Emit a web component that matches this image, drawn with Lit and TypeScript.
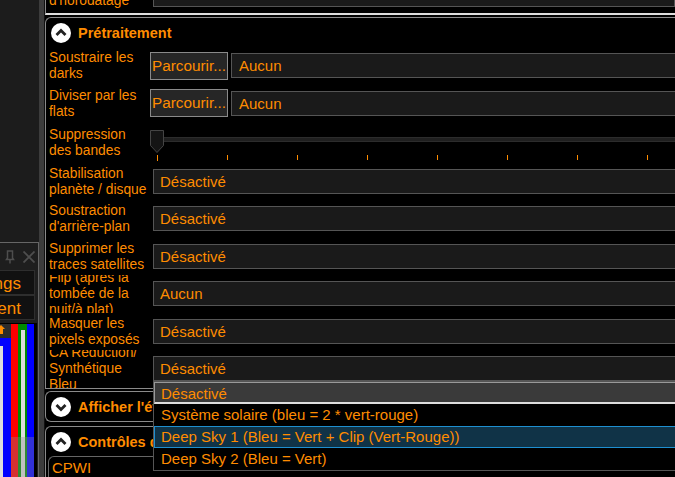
import { LitElement, html, css } from "lit";
import { customElement } from "lit/decorators.js";

const chevron = (up: boolean) => html`<svg class="chev" width="22" height="22" viewBox="0 0 22 22">
  <circle cx="11" cy="11" r="10" fill="#fff"></circle>
  <path d=${up ? "M6.5 13 L11 8.5 L15.5 13" : "M6.5 9 L11 13.5 L15.5 9"} fill="none" stroke="#222" stroke-width="2.8"></path>
</svg>`;

const rows: [string, string][] = [
  ["Stabilisation planète / disque", "Désactivé"],
  ["Soustraction d'arrière-plan", "Désactivé"],
  ["Supprimer les traces satellites", "Désactivé"],
  ["Flip (après la tombée de la nuit/à plat)", "Aucun"],
  ["Masquer les pixels exposés", "Désactivé"],
];

@customElement("app-root")
export class AppRoot extends LitElement {
  static styles = css`
    :host { display: block; width: 675px; height: 477px; overflow: hidden; background: #000; }
    * { box-sizing: border-box; }
    .page { display: flex; width: 675px; height: 477px; font-family: "Liberation Sans", Arial, sans-serif; color: #ff8c00; font-size: 13.8px; }
    .side { width: 39px; flex: none; display: flex; flex-direction: column; background: #1c1c1c; }
    .side-top { height: 242px; flex: none; }
    .dock { flex: 1; min-height: 0; display: flex; flex-direction: column; border-top: 1px solid #666; border-right: 1px solid #666; overflow: hidden; background: #1e1e1e; }
    .dock-title { height: 27px; flex: none; display: flex; align-items: center; justify-content: flex-end; gap: 8px; padding-right: 3px; }
    .tab { height: 25px; flex: none; width: 35px; background: #111; border: 1px solid #2e2e2e; border-left: 0; font-size: 17px; line-height: 26px; display: flex; justify-content: flex-end; overflow: hidden; white-space: nowrap; padding-right: 13px; }
    .dock-gap { height: 3px; flex: none; }
    .hist { flex: 1; width: 37px; min-height: 0; position: relative; display: flex; background: #000; padding-right: 3px; border-top: 1px solid #000; }
    .hist-veil { position: absolute; left: 11px; right: 3px; bottom: 0; height: 40px; background: rgba(140,140,140,.35); }
    .hist-l { width: 11px; display: flex; flex-direction: column; }
    .hist-head { height: 14px; flex: none; background: #2c2c2c; display: flex; align-items: flex-start; }
    .hist-blue { flex: 1; background: #00f; padding-top: 8px; }
    .hist-blue i { display: block; width: 3px; height: 100%; background: #ddd; }
    .band { height: 100%; }
    .r { width: 7px; background: #f00; }
    .g { width: 9px; background: #008a00; padding: 6px 2px 0 3px; }
    .g i { display: block; height: 100%; background: #ddd; }
    .b { width: 7px; background: #00f; }
    .split { width: 6px; flex: none; background: #3c3c3c; border-right: 1px solid #111; }
    .main { flex: 1; min-width: 0; overflow: hidden; display: flex; flex-direction: column; }
    .prev { height: 15px; flex: none; border-bottom: 2px solid #ddd; border-left: 1px solid #888; padding-left: 3px; display: flex; overflow: hidden; }
    .prev-label { width: 104px; flex: none; height: 9px; display: flex; align-items: flex-end; overflow: hidden; line-height: 16px; white-space: nowrap; }
    .prev-box { flex: 1; height: 7px; background: #1a1a1a; border: 1px solid #555; border-top: 0; }
    .group { border: 1px solid #8a8a8a; border-right: 0; border-radius: 6px 0 0 0; margin-top: 2px; flex: none; }
    .head { display: flex; align-items: center; gap: 6px; padding-left: 4px; font-size: 14.5px; font-weight: 700; white-space: nowrap; overflow: hidden; }
    .chev { flex: none; }
    .pre { height: 372px; border-bottom: 1px solid #8a8a8a; border-radius: 6px 0 0 0; }
    .pre .head { height: 29px; }
    .grid { display: grid; grid-template-columns: 101px 1fr; grid-template-rows: 37.5px 37.5px 40.5px; grid-auto-rows: 37.5px; padding-left: 3px; }
    .label { height: 100%; display: flex; align-items: center; overflow: hidden; line-height: 16px; padding-top: 1px; }
    .ctl { position: relative; display: flex; align-items: center; gap: 3px; min-width: 0; }
    .btn { width: 78px; height: 28px; flex: none; background: #262626; border: 1px solid #8a8a8a; font-size: 15.3px; line-height: 26px; padding-left: 1px; white-space: nowrap; overflow: hidden; }
    .field { flex: 1; height: 25px; background: #1a1a1a; border: 1px solid #555; border-right: 0; font-size: 15px; line-height: 24px; padding-left: 7px; white-space: nowrap; }
    .sel { margin-left: 3px; padding-left: 6px; }
    .slider { display: flex; flex-direction: column; align-self: flex-start; width: 100%; padding-top: 8px; }
    .slide-line { display: flex; align-items: flex-start; height: 24px; flex: none; }
    .thumb { flex: none; display: block; }
    .track { flex: 1; height: 5px; margin-top: 7px; background: #1f1f1f; border-top: 1px solid #2c2c2c; border-bottom: 1px solid #2c2c2c; }
    .ticks { display: flex; gap: 69px; padding-left: 7px; margin-top: 1px; }
    .ticks i { width: 1px; height: 5px; flex: none; background: #ff8c00; }
    .ticks i:first-child { height: 6px; }
    .drop { position: absolute; left: 3px; top: 31px; right: -1px; height: 90px; background: #000; border: 1px solid #555; border-right: 0; font-size: 15px; z-index: 2; white-space: nowrap; }
    .opt { height: 22px; line-height: 20px; padding-left: 6px; border: 1px solid transparent; border-right: 0; }
    .opt.cur { background: #3a3a3a; border-color: #999; border-bottom: 2px solid #ddd; height: 22px; line-height: 22px; }
    .opt.hov { background: #103347; border-color: #1e8fd0; }
    .bar2 { margin-top: 2px; border-radius: 6px 0 0 6px; height: 31px; }
    .bar2 .head { height: 29px; }
    .bar3 { margin-top: 4px; flex: 1; border-bottom: 0; }
    .bar3 .head { height: 29px; }
    .inner { margin-left: 2px; height: 100%; border: 1px solid #666; border-right: 0; border-radius: 6px 0 0 0; padding-left: 3px; font-size: 15px; line-height: 20px; padding-top: 1px; }
  `;

  private sel(v: string) {
    return html`<div class="field sel">${v}</div>`;
  }

  render() {
    return html`<div class="page">
      <div class="side">
        <div class="side-top"></div>
        <div class="dock">
          <div class="dock-title">
            <svg width="10" height="14" viewBox="0 0 10 14"><path d="M2.500 1h5v7l1 1.500h-7l1-1.500zM5 9.500v4" fill="none" stroke="#4e4e4e" stroke-width="1.500"></path></svg>
            <svg width="12" height="12" viewBox="0 0 12 12"><path d="M.5.5l11 11M11.500.5l-11 11" stroke="#4e4e4e" stroke-width="1.800"></path></svg>
          </div>
          <div class="tab">ngs</div>
          <div class="tab">ent</div>
          <div class="dock-gap"></div>
          <div class="hist">
            <div class="hist-l">
              <div class="hist-head">
                <svg width="5" height="10" viewBox="0 0 5 10"><path d="M-3 5L1 1L5 5H3V10H-1V5z" fill="#ff8c00"></path></svg>
              </div>
              <div class="hist-blue"><i></i></div>
            </div>
            <div class="band r"></div>
            <div class="band g"><i></i></div>
            <div class="band b"></div>
            <div class="hist-veil"></div>
          </div>
        </div>
      </div>
      <div class="split"></div>
      <div class="main">
        <div class="prev">
          <div class="prev-label">d'horodatage</div>
          <div class="prev-box"></div>
        </div>
        <div class="group pre">
          <div class="head">${chevron(true)}<span>Prétraitement</span></div>
          <div class="grid">
            <div class="label">Soustraire les darks</div>
            <div class="ctl"><div class="btn">Parcourir...</div><div class="field">Aucun</div></div>
            <div class="label">Diviser par les flats</div>
            <div class="ctl"><div class="btn">Parcourir...</div><div class="field">Aucun</div></div>
            <div class="label">Suppression des bandes</div>
            <div class="ctl">
              <div class="slider">
                <div class="slide-line">
                  <svg class="thumb" width="14" height="23" viewBox="0 0 14 23"><path d="M.5.500h13v15l-6.500 7l-6.500-7z" fill="#141414" stroke="#444"></path></svg>
                  <div class="track"></div>
                </div>
                <div class="ticks">${[0, 1, 2, 3, 4, 5, 6, 7].map(() => html`<i></i>`)}</div>
              </div>
            </div>
            ${rows.map(
              ([l, v]) => html`<div class="label">${l}</div><div class="ctl">${this.sel(v)}</div>`
            )}
            <div class="label">CA Réduction/ Synthétique Bleu</div>
            <div class="ctl">
              ${this.sel("Désactivé")}
              <div class="drop">
                <div class="opt cur">Désactivé</div>
                <div class="opt">Système solaire (bleu = 2 * vert-rouge)</div>
                <div class="opt hov">Deep Sky 1 (Bleu = Vert + Clip (Vert-Rouge))</div>
                <div class="opt">Deep Sky 2 (Bleu = Vert)</div>
              </div>
            </div>
          </div>
        </div>
        <div class="group bar2">
          <div class="head">${chevron(false)}<span>Afficher l'état</span></div>
        </div>
        <div class="group bar3">
          <div class="head">${chevron(true)}<span>Contrôles de la caméra</span></div>
          <div class="inner">CPWI</div>
        </div>
      </div>
    </div>`;
  }
}
